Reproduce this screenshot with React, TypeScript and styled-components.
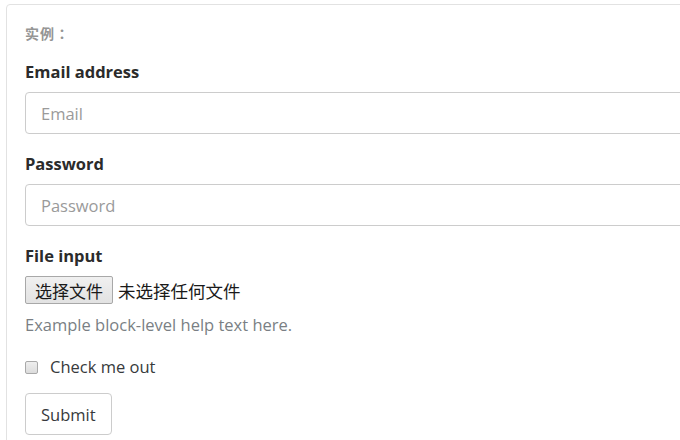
import React from "react";
import styled, { createGlobalStyle } from "styled-components";

const Global = createGlobalStyle`
  html, body { margin: 0; padding: 0; background: #fff; overflow: hidden; }
  body { font-family: "Open Sans", "Noto Sans CJK SC", sans-serif; color: #373a3c; }
`;

const Page = styled.div`
  padding: 4px 0 0 6px;
  width: 800px;
`;

const Card = styled.div`
  border: 1px solid #e2e2e2;
  border-radius: 4px;
  padding: 18px 18px 30px 18px;
  width: 760px;
`;

const Caption = styled.div`
  font-family: "Noto Sans CJK TC", "Noto Sans CJK SC", sans-serif;
  font-size: 14px;
  line-height: 20px;
  font-weight: 700;
  color: #959595;
  letter-spacing: 1px;
  margin-bottom: 17px;
`;

const Form = styled.form`
  display: flex;
  flex-direction: column;
`;

const Group = styled.div<{ $mb?: number }>`
  display: flex;
  flex-direction: column;
  align-items: flex-start;
  margin-bottom: ${(p) => (p.$mb ?? 18)}px;
`;

const Label = styled.label`
  font-size: 16.5px;
  line-height: 24px;
  font-weight: 700;
  color: #2b2b2b;
  margin-bottom: 8px;
`;

const Input = styled.input`
  box-sizing: border-box;
  width: 100%;
  height: 42px;
  padding: 0 15px;
  font-family: "Open Sans", sans-serif;
  font-size: 16.5px;
  color: #55595c;
  border: 1px solid #cccccc;
  border-radius: 4px;
  outline: none;
  &::placeholder { color: #9a9a9a; }
`;

const FileRow = styled.div`
  display: flex;
  align-items: center;
  gap: 5px;
  height: 28px;
`;

const FileButton = styled.button`
  box-sizing: border-box;
  height: 28px;
  padding: 0 9px;
  font-family: "Noto Sans CJK SC", sans-serif;
  font-size: 17px;
  color: #1a1a1a;
  background: linear-gradient(#f0f0f0, #e2e2e2);
  border: 1px solid #a8a8a8;
  border-radius: 2px;
`;

const FileName = styled.span`
  font-family: "Noto Sans CJK SC", sans-serif;
  font-size: 17.5px;
  color: #1a1a1a;
`;

const Help = styled.small`
  display: block;
  margin-top: 9px;
  font-size: 16.5px;
  line-height: 24px;
  color: #7a7f84;
`;

const CheckLabel = styled.label`
  display: flex;
  align-items: center;
  gap: 12px;
  font-size: 16.5px;
  line-height: 24px;
  color: #373a3c;
`;

const Box = styled.span`
  box-sizing: border-box;
  width: 13px;
  height: 13px;
  border: 1px solid #a9a9a9;
  border-radius: 2px;
  background: linear-gradient(#eeeeee, #dcdcdc);
`;

const Submit = styled.button`
  box-sizing: border-box;
  align-self: flex-start;
  height: 42px;
  padding: 0 15px;
  font-family: "Open Sans", sans-serif;
  font-size: 16.5px;
  color: #373a3c;
  background: #fff;
  border: 1px solid #cccccc;
  border-radius: 4px;
`;

export default function App() {
  return (
    <>
      <Global />
      <Page>
        <Card>
          <Caption>实例：</Caption>
          <Form onSubmit={(e) => e.preventDefault()}>
            <Group>
              <Label>Email address</Label>
              <Input type="email" placeholder="Email" />
            </Group>
            <Group>
              <Label>Password</Label>
              <Input type="password" placeholder="Password" />
            </Group>
            <Group>
              <Label>File input</Label>
              <FileRow>
                <FileButton type="button">选择文件</FileButton>
                <FileName>未选择任何文件</FileName>
              </FileRow>
              <Help>Example block-level help text here.</Help>
            </Group>
            <Group $mb={14}>
              <CheckLabel>
                <Box />
                Check me out
              </CheckLabel>
            </Group>
            <Submit type="submit">Submit</Submit>
          </Form>
        </Card>
      </Page>
    </>
  );
}
